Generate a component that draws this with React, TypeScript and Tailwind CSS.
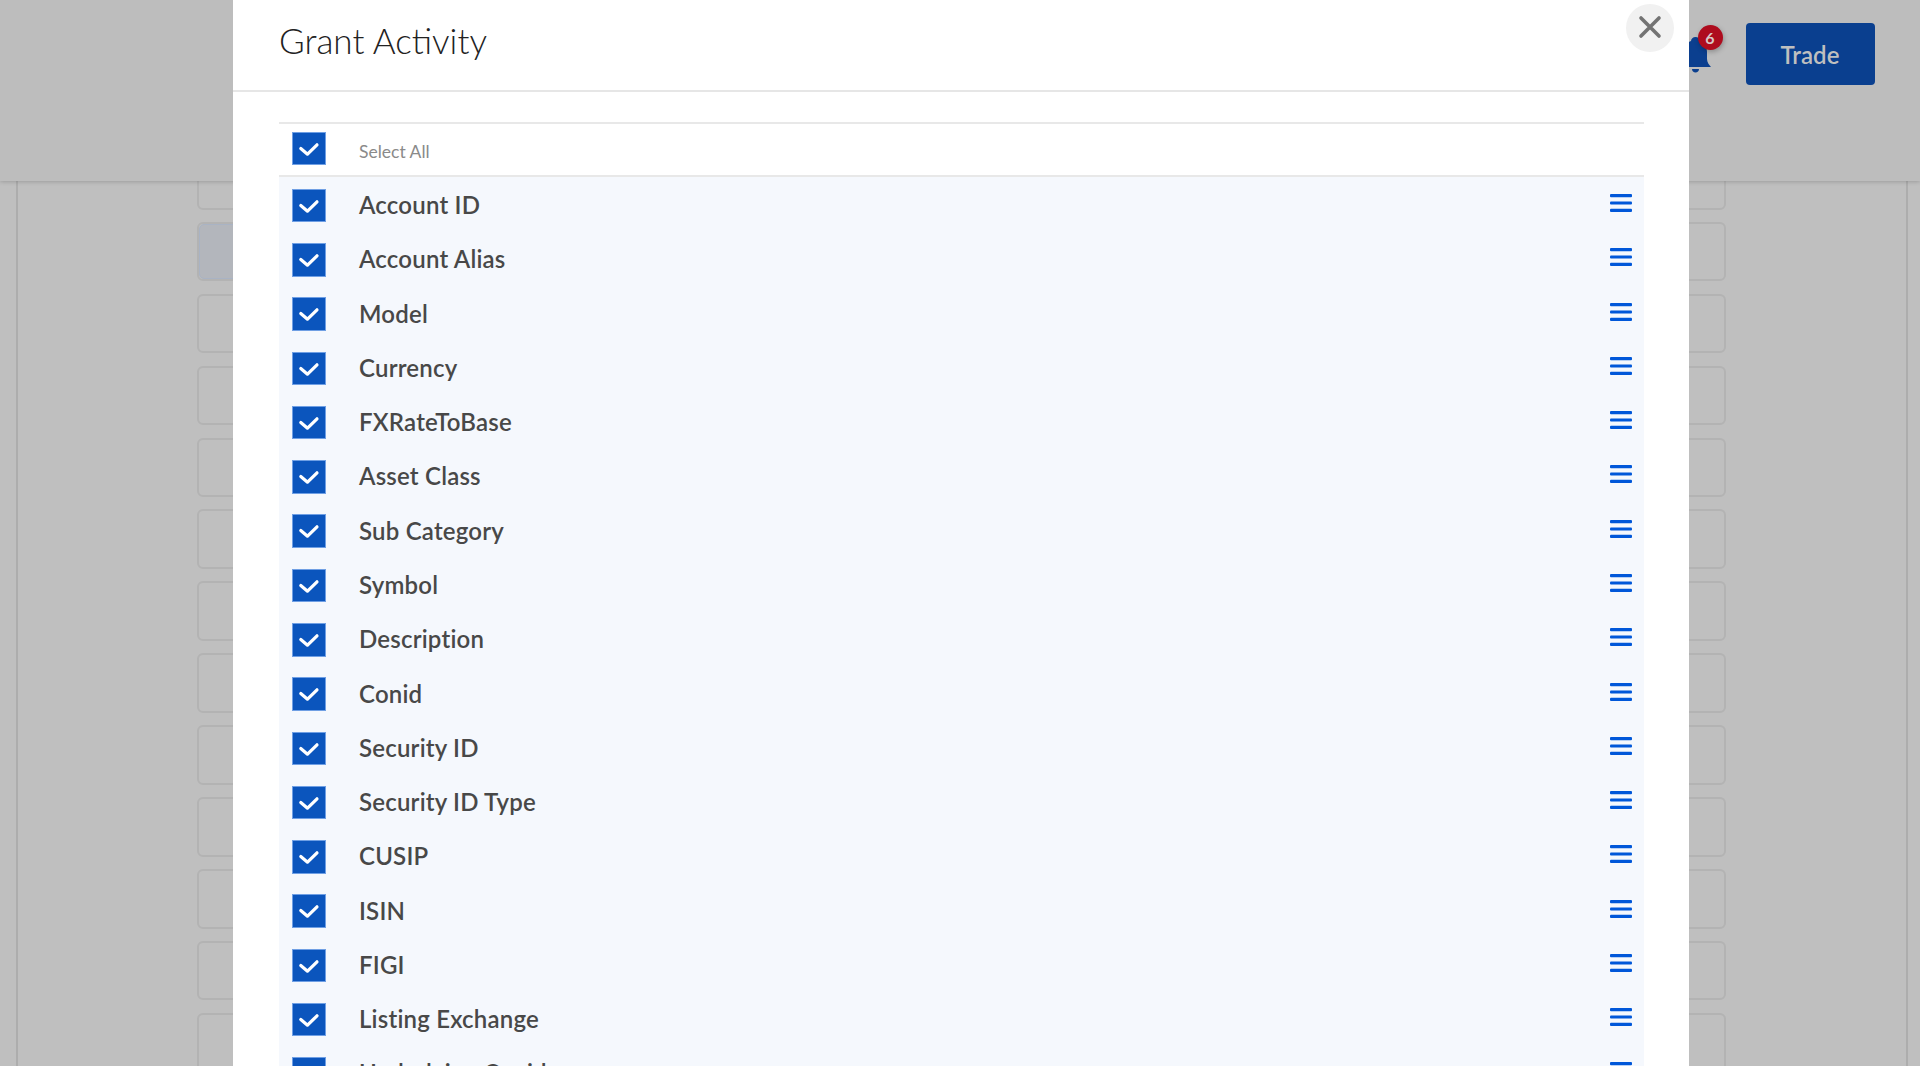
const columns = [
  "Account ID",
  "Account Alias",
  "Model",
  "Currency",
  "FXRateToBase",
  "Asset Class",
  "Sub Category",
  "Symbol",
  "Description",
  "Conid",
  "Security ID",
  "Security ID Type",
  "CUSIP",
  "ISIN",
  "FIGI",
  "Listing Exchange",
  "Underlying Conid",
];

const cards = Array.from({ length: 13 }, (_, i) => i);

function Checkbox() {
  return (
    <span className="flex h-[33.5px] w-[33.5px] shrink-0 items-center justify-center border border-[#6f9fe4] bg-[#0b55bd]">
      <svg viewBox="0 0 31.5 31.5" className="h-full w-full" fill="none">
        <path d="M7.8 15.5 L14.5 21.2 L24 11.8" stroke="#fff" strokeWidth="3.2" strokeLinecap="round" strokeLinejoin="round" />
      </svg>
    </span>
  );
}

function DragHandle() {
  return (
    <svg viewBox="0 0 22 20" className="mb-[5px] ml-auto h-[20px] w-[22px]" fill="#0057d9">
      <rect x="0" y="1" width="22" height="3.2" rx="1" />
      <rect x="0" y="8.4" width="22" height="3.2" rx="1" />
      <rect x="0" y="15.8" width="22" height="3.2" rx="1" />
    </svg>
  );
}

export default function App() {
  return (
    <div className="relative h-[1066px] w-full overflow-hidden bg-[#bfbfbf] font-['Lato','Noto_Sans',sans-serif]">
      <header className="relative z-10 flex h-[181px] items-start justify-end bg-[#bdbdbd] pr-[45.5px] pt-[23px] shadow-[0_1px_4px_rgba(0,0,0,0.18)]">
        <div className="relative mr-[35px] mt-[14px] h-[36px] w-[31px]">
          <svg viewBox="0 0 31 36" className="h-full w-full" fill="#0b3f8f">
            <path d="M15.5 0 C18 0 20 2 20 4 C25 6 27 10 27 15 L27 22 C27 25 29 28 31 30 L0 30 C2 28 4 25 4 22 L4 15 C4 10 6 6 11 4 C11 2 13 0 15.5 0 Z" />
            <path d="M12 32 L19 32 C19 34 17.5 35.500 15.500 35.500 C13.500 35.500 12 34 12 32 Z" />
          </svg>
          <span className="absolute left-[18px] top-[-12px] flex h-[25px] w-[25px] items-center justify-center rounded-full bg-[#ae0c1e] text-[16px] font-bold text-[#d8c8c8] shadow-[1px_2px_5px_rgba(0,0,0,0.25)]">
            6
          </span>
        </div>
        <button className="h-[62px] w-[129px] rounded-[4px] bg-[#0a3f8f] pt-[2px] text-[24px] font-semibold text-[#bfbfbf]">Trade</button>
      </header>

      <main className="ml-4 mt-[-31px] h-[920px] w-[1892px] border-x-2 border-[#adadad] pl-[178.500px]">
        <div className="flex w-[1529px] flex-col gap-[12.3px]">
          {cards.map((i) => (
            <div key={i} className="h-[59.6px] shrink-0 rounded-[6px] border-2 border-[#b3b3b3]">
              {i === 1 && <div className="h-full w-[400px] rounded-l-[5px] border border-[#a9b3c4] bg-[#b3b6bc]" />}
            </div>
          ))}
        </div>
      </main>

      <div className="absolute bottom-0 left-[233px] top-0 z-20 w-[1456px] overflow-hidden bg-white">
        <div className="flex h-[92px] items-start border-b-2 border-[#e6e6e6] pl-[46px] pt-[17px] text-[35px] font-light leading-[46px] text-[#222]">
          Grant Activity
        </div>
        <button className="absolute left-[1392.5px] top-[4px] flex h-[48px] w-[48px] items-center justify-center rounded-full bg-[#f1f1f1] pb-[2px]">
          <svg viewBox="0 0 24 24" className="h-[24px] w-[24px]" fill="none" stroke="#737373" strokeWidth="3.600" strokeLinecap="round">
            <path d="M3 3 L21 21 M21 3 L3 21" />
          </svg>
        </button>

        <div className="ml-[46px] mt-[30px] w-[1365px]">
          <div className="flex h-[55px] items-center border-y-2 border-[#e8e8e8] pl-[13px]">
            <span className="mb-[2px]">
              <Checkbox />
            </span>
            <span className="ml-[33.5px] mt-[6px] text-[17.500px] text-[#8a8a8a]">Select All</span>
          </div>
          <div className="bg-[#f5f8fd] pt-[1.5px]">
            {columns.map((name) => (
              <div key={name} className="flex h-[54.27px] items-center pl-[13px] pr-[12px]">
                <Checkbox />
                <span className="mb-[1px] ml-[33.5px] text-[24px] font-semibold tracking-[0.2px] text-[#484848]">{name}</span>
                <DragHandle />
              </div>
            ))}
          </div>
        </div>
      </div>
    </div>
  );
}
